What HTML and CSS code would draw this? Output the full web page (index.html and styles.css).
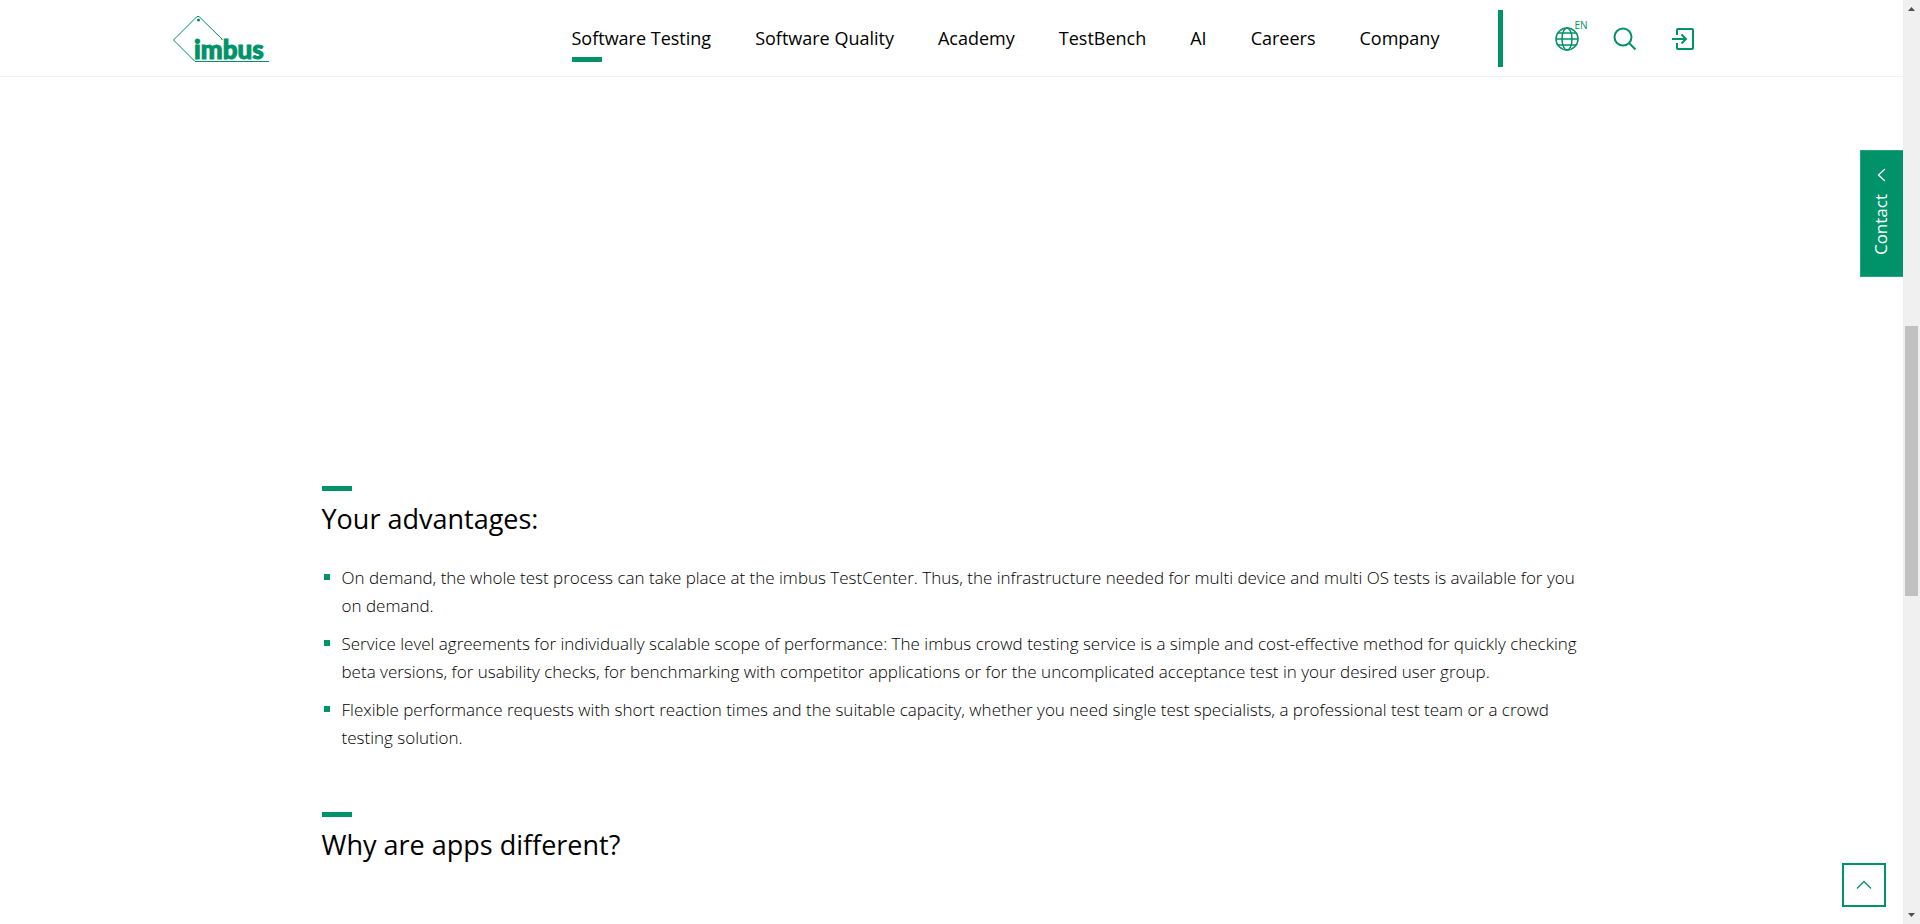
FILE: index.html
```html
<!DOCTYPE html>
<html lang="en">
<head>
<meta charset="utf-8">
<meta name="viewport" content="width=device-width, initial-scale=1">
<title>imbus – Mobile App Testing</title>
<link rel="stylesheet" href="styles.css">
</head>
<body>
<div class="page">
  <header class="header">
    <div class="header-inner">
      <a class="logo" href="#" aria-label="imbus home">
        <svg width="98" height="60" viewBox="0 -6 98 60">
          <path d="M50 26V25L27.500 3Q26 1.500 24.500 3L1.500 26L23 47.500H97" fill="none" stroke="#009268" stroke-width="1"/>
          <circle cx="26.500" cy="6" r="1.600" fill="#009268"/>
          <text class="logo-text" x="22" y="45">imbus</text>
        </svg>
      </a>
      <nav class="nav" aria-label="Main">
        <a class="nav-link active" href="#">Software Testing</a>
        <a class="nav-link" href="#">Software Quality</a>
        <a class="nav-link" href="#">Academy</a>
        <a class="nav-link" href="#">TestBench</a>
        <a class="nav-link" href="#">AI</a>
        <a class="nav-link" href="#">Careers</a>
        <a class="nav-link" href="#">Company</a>
      </nav>
      <div class="tools">
        <button class="tool language" type="button" aria-label="Language: EN">
          <svg width="24" height="24" viewBox="0 0 24 24" fill="none" stroke="currentColor" stroke-width="1.500">
            <circle cx="12" cy="12" r="11"/>
            <ellipse cx="12" cy="12" rx="5" ry="11"/>
            <path d="M1 12H23M3 6H21M3 18H21"/>
          </svg>
          <span class="language-code">EN</span>
        </button>
        <button class="tool" type="button" aria-label="Search">
          <svg width="24" height="24" viewBox="0 0 24 24" fill="none" stroke="currentColor" stroke-width="2">
            <circle cx="10" cy="10" r="8.500"/>
            <path d="M16 16L22.500 22.500"/>
          </svg>
        </button>
        <a class="tool" href="#" aria-label="Login">
          <svg width="24" height="24" viewBox="0 0 24 24" fill="none" stroke="currentColor" stroke-width="2">
            <path d="M6 8V3Q6 2 7 2H21Q22 2 22 3V21Q22 22 21 22H7Q6 22 6 21V16M1 12H15M10.500 7.500L15 12L10.500 16.500"/>
          </svg>
        </a>
      </div>
    </div>
  </header>
  <main class="content">
    <section class="section">
      <h2 class="heading">Your advantages:</h2>
      <ul class="list">
        <li>On demand, the whole test process can take place at the imbus TestCenter. Thus, the infrastructure needed for multi device and multi OS tests is available for you on demand.</li>
        <li>Service level agreements for individually scalable scope of performance: The imbus crowd testing service is a simple and cost-effective method for quickly checking beta versions, for usability checks, for benchmarking with competitor applications or for the uncomplicated acceptance test in your desired user group.</li>
        <li>Flexible performance requests with short reaction times and the suitable capacity, whether you need single test specialists, a professional test team or a crowd testing solution.</li>
      </ul>
    </section>
    <section class="section">
      <h2 class="heading">Why are apps different?</h2>
    </section>
  </main>
  <button class="contact" type="button">
    <span class="contact-label">Contact</span>
    <svg width="9" height="14" viewBox="0 0 9 14" fill="none" stroke="currentColor" stroke-width="1.300"><path d="M8 1L1.500 7L8 13"/></svg>
  </button>
  <a class="to-top" href="#" aria-label="Back to top">
    <svg width="16" height="10" viewBox="0 0 16 10" fill="none" stroke="currentColor" stroke-width="1.300"><path d="M1 8.500L8 1.500L15 8.500"/></svg>
  </a>
</div>
<div class="scrollbar" aria-hidden="true">
  <svg width="17" height="17" viewBox="0 0 17 17" fill="#505050"><path d="M5 11L8.500 7L12 11Z"/></svg>
  <div class="track"><div class="thumb"></div></div>
  <svg width="17" height="17" viewBox="0 0 17 17" fill="#505050"><path d="M5 6L8.500 10L12 6Z"/></svg>
</div>
</body>
</html>
```
FILE: styles.css
```css
* {
  box-sizing: border-box;
}

body {
  margin: 0;
  display: flex;
  height: 100vh;
  overflow: hidden;
  background: #fff;
  color: #000;
  font-family: "Open Sans", "Noto Sans", sans-serif;
}

a {
  color: inherit;
  text-decoration: none;
}

button {
  font: inherit;
  color: inherit;
  border: 0;
  padding: 0;
  background: none;
}

svg {
  display: block;
}

.page {
  position: relative;
  flex: 1;
  min-width: 0;
}

.header {
  border-bottom: 1px solid #f2f2f2;
}

.header-inner {
  display: flex;
  align-items: center;
  max-width: 1560px;
  height: 76px;
  margin: 0 auto;
}

.logo-text {
  font-family: Lato, sans-serif;
  font-size: 26px;
  font-weight: 900;
  fill: #009268;
  stroke: #009268;
  stroke-width: 1px;
}

.nav {
  flex: 1;
  display: flex;
  justify-content: space-between;
  margin-left: 302px;
}

.nav-link {
  position: relative;
  font-size: 18px;
  line-height: 24px;
  white-space: nowrap;
}

.nav-link.active::after {
  content: "";
  position: absolute;
  left: 0;
  top: 31px;
  width: 30px;
  height: 5px;
  background: #009268;
}

.tools {
  display: flex;
  align-items: center;
  gap: 34px;
  height: 57px;
  margin-left: 58px;
  padding: 1px 37px 0 52px;
  border-left: 5px solid #009268;
  color: #009268;
}

.tool {
  position: relative;
}

.language-code {
  position: absolute;
  left: 20px;
  top: -9px;
  font-size: 10px;
  line-height: 14px;
}

.content {
  max-width: 1260px;
  margin: 0 auto;
  padding-top: 409px;
}

.section {
  margin-bottom: 60px;
}

.heading {
  margin: 0;
  font-size: 27px;
  line-height: 36px;
  font-weight: 400;
}

.heading::before {
  content: "";
  display: block;
  width: 30px;
  height: 5px;
  margin-bottom: 10px;
  background: #009268;
}

.list {
  display: grid;
  gap: 10px;
  margin: 27px 0 0;
  padding: 0;
  list-style: none;
}

.list li {
  position: relative;
  padding-left: 20px;
  font-size: 17px;
  line-height: 28px;
  font-weight: 300;
}

.list li::before {
  content: "";
  position: absolute;
  left: 2px;
  top: 10px;
  width: 6px;
  height: 6px;
  background: #009268;
}

.contact {
  position: absolute;
  top: 150px;
  right: 0;
  display: flex;
  flex-direction: column-reverse;
  align-items: center;
  justify-content: center;
  gap: 12px;
  width: 43px;
  height: 127px;
  padding: 0 2px 4px 0;
  border: 1px solid #26a27f;
  border-right: 0;
  background: #009268;
  color: #fff;
}

.contact-label {
  writing-mode: vertical-rl;
  transform: rotate(180deg);
  font-size: 17px;
  line-height: 24px;
}

.to-top {
  position: absolute;
  right: 17px;
  bottom: 17px;
  display: grid;
  place-items: center;
  width: 44px;
  height: 44px;
  border: 2px solid #009268;
  background: #fff;
  color: #009268;
}

.scrollbar {
  display: flex;
  flex-direction: column;
  width: 17px;
  background: #f0f0f0;
}

.track {
  flex: 1;
  padding: 0 2px;
}

.thumb {
  height: 270px;
  margin-top: 309px;
  background: #c1c1c1;
}
```
